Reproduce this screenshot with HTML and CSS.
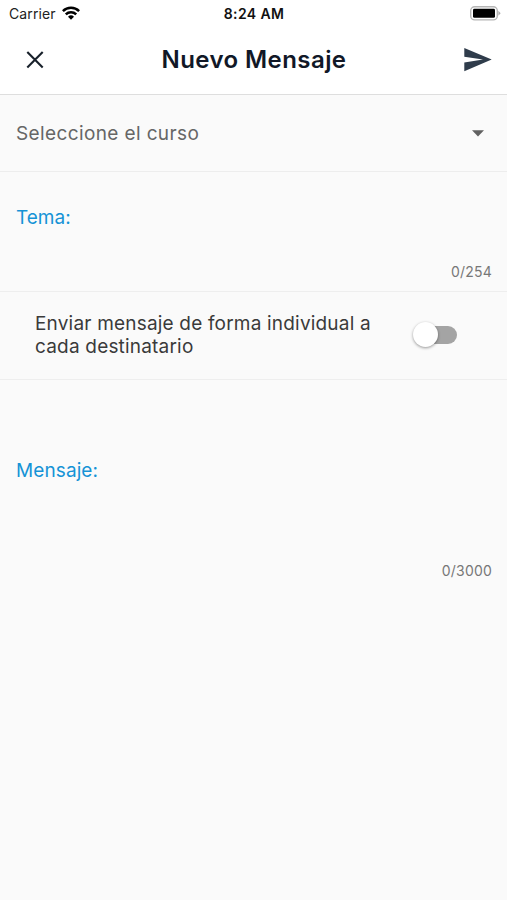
FILE: index.html
```html
<!DOCTYPE html>
<html lang="es">
<head>
<meta charset="utf-8">
<title>Nuevo Mensaje</title>
<link rel="stylesheet" href="styles.css">
</head>
<body>
<header class="top">
  <div class="status">
    <div class="carrier"><span>Carrier</span>
      <svg class="wifi" width="18" height="14" viewBox="0 0 18 14"><g fill="none" stroke="#000" stroke-width="2.5"><path d="M.9 5.1a11.5 11.5 0 0 1 16.2 0"/><path d="M3.8 8.4a7.4 7.4 0 0 1 10.4 0"/></g><path d="M9 13.7 6 10.8a4.3 4.3 0 0 1 6 0z"/></svg>
    </div>
    <time class="clock">8:24 AM</time>
    <svg class="battery" width="31" height="15" viewBox="0 0 31 15"><rect x=".7" y=".7" width="26.6" height="13.2" rx="4" fill="#fff" stroke="#b5b5b5" stroke-width="1.4"/><rect x="3" y="2.8" width="22" height="9" rx="1.4"/><path d="M28.4 4.8 30.6 7.3 28.4 9.8z" fill="#aaa"/></svg>
  </div>
  <nav class="bar">
    <svg class="close" width="18" height="18" viewBox="0 0 18 18"><path d="M1.3 1 16.7 16.4M16.7 1 1.3 16.4" stroke="#18212b" stroke-width="2.1" fill="none"/></svg>
    <h1 class="title">Nuevo Mensaje</h1>
    <svg class="send" width="28" height="24" viewBox="0 0 28 24"><path d="M.3 0 27.7 11.6 .3 23.3V14.4L19 11.6 .3 8.8z" fill="#2f3c4b"/></svg>
  </nav>
</header>
<main>
  <div class="course"><span class="course-label">Seleccione el curso</span>
    <svg width="12" height="7" viewBox="0 0 12 7"><path d="M0 .3h12L6 6.5z" fill="#616161"/></svg>
  </div>
  <section class="subject"><label class="label subject-label">Tema:</label><span class="count">0/254</span></section>
  <section class="individual"><p class="text">Enviar mensaje de forma individual a<br>cada destinatario</p><span class="switch"><span class="knob"></span></span></section>
  <section class="message"><label class="label message-label">Mensaje:</label><span class="count">0/3000</span></section>
</main>
</body>
</html>
```
FILE: styles.css
```css
* { box-sizing: border-box; }
body { margin: 0; height: 900px; background: #fafafa; font-family: Inter, "Liberation Sans", sans-serif; overflow: hidden; }
svg { display: block; flex: none; }
.top { height: 95px; background: #fff; border-bottom: 1px solid #dedede; }
.status { height: 27px; display: grid; grid-template-columns: 1fr auto 1fr; align-items: center; padding: 0 6px 0 9px; }
.carrier { display: flex; align-items: center; gap: 6px; font-size: 14px; letter-spacing: .12px; line-height: 27px; color: #222; }
.wifi { margin-top: -2px; }
.clock { font-size: 14px; font-weight: 600; letter-spacing: .4px; margin-right: 2px; line-height: 27px; color: #111; }
.battery { justify-self: end; }
.bar { height: 66px; display: flex; align-items: center; justify-content: space-between; padding: 0 15px 0 26px; }
.title { margin: 0; font-size: 24px; font-weight: 600; letter-spacing: .43px; line-height: 30px; color: #111827; white-space: nowrap; }
.course { height: 77px; border-bottom: 1px solid #ededed; display: flex; align-items: center; justify-content: space-between; padding: 0 23px 0 16px; }
.course-label { margin-top: 2px; font-size: 19px; letter-spacing: .38px; line-height: 24px; color: #666; }
.subject { height: 120px; border-bottom: 1px solid #eee; padding: 34px 15px 0 16px; display: flex; flex-direction: column; }
.label { font-size: 19px; line-height: 24px; color: #1593d6; }
.message-label { letter-spacing: .1px; }
.count { align-self: flex-end; font-size: 14px; letter-spacing: .2px; line-height: 18px; color: #777; margin-top: 33px; }
.individual { height: 88px; border-bottom: 1px solid #eee; display: flex; align-items: center; justify-content: space-between; padding: 0 50px 2px 35px; }
.text { margin: 0; font-size: 19px; letter-spacing: .19px; line-height: 23px; color: #3a3a3a; white-space: nowrap; }
.switch { width: 44px; height: 26px; display: grid; align-items: center; }
.switch::before { content: ""; grid-area: 1 / 1; justify-self: end; width: 36px; height: 18px; border-radius: 9px; background: #a4a4a4; }
.knob { grid-area: 1 / 1; width: 25px; height: 25px; border-radius: 50%; background: #fff; box-shadow: 0 1px 3px rgba(0,0,0,.4); }
.message { padding: 79px 15px 0 16px; display: flex; flex-direction: column; }
.message .count { margin-top: 79px; }
```
